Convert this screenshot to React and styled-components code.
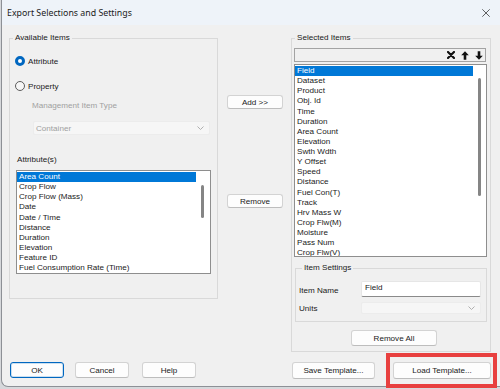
import React from 'react';
import styled, { createGlobalStyle } from 'styled-components';

const GlobalStyle = createGlobalStyle`
  html, body {
    margin: 0;
    padding: 0;
  }
  body {
    width: 500px;
    height: 389px;
    overflow: hidden;
    background: #d6d8db;
    font-family: 'Liberation Sans', Arial, sans-serif;
    color: #1a1a1a;
  }
`;

const Window = styled.div`
  width: 499px;
  height: 387px;
  margin-left: 1px;
  box-sizing: border-box;
  border-left: 1px solid #8d9096;
  border-bottom: 1px solid #8d9096;
  border-radius: 0 0 0 7px;
  background: #f0f0f0;
  display: flex;
  flex-direction: column;
`;

const TitleBar = styled.div`
  height: 25px;
  flex-shrink: 0;
  background: #eef3f9;
  display: flex;
  align-items: center;
  padding: 0 10px 0 5px;
  font-family: 'Noto Sans', 'Liberation Sans', sans-serif;
  font-size: 8.8px;
  color: #1a1a1a;
`;

const CloseBox = styled.div`
  margin-left: auto;
  width: 8px;
  height: 8px;
  display: flex;
`;

const Body = styled.div`
  display: flex;
  padding: 8px 0 0 7px;
`;

const LeftCol = styled.div`
  width: 209px;
  display: flex;
  flex-direction: column;
`;

const MidCol = styled.div`
  width: 64px;
  padding-left: 9px;
  display: flex;
  flex-direction: column;
`;

const RightCol = styled.div`
  width: 200px;
  display: flex;
  flex-direction: column;
`;

const Group = styled.fieldset`
  margin: ${p => p.$margin || '0'};
  padding: 0 0 0 ${p => p.$padLeft || 0}px;
  width: ${p => p.$width}px;
  height: ${p => p.$height}px;
  box-sizing: border-box;
  border: 1px solid #d9d9d9;
  min-width: 0;
  display: flex;
  flex-direction: column;
`;

const Legend = styled.legend`
  padding: 0 2px;
  margin-left: 3px;
  font-size: 8.1px;
  line-height: 10px;
  color: #1a1a1a;
`;

const RadioRow = styled.div`
  display: flex;
  align-items: center;
  gap: 3px;
  height: 12px;
  margin: ${p => p.$mt}px 0 0 5px;
  font-size: 8.1px;
`;

const RadioDot = styled.span`
  width: 10px;
  height: 10px;
  box-sizing: border-box;
  border-radius: 50%;
  border: ${p => (p.$checked ? '3px solid #0067c0' : '1px solid #5c5c5c')};
  background: ${p => (p.$checked ? '#ffffff' : '#f6f6f6')};
`;

const Label = styled.div`
  font-size: 8.1px;
  line-height: 10px;
  height: 10px;
  color: ${p => (p.$disabled ? '#a0a0a0' : '#1a1a1a')};
  margin: ${p => p.$margin};
  white-space: nowrap;
`;

const Combo = styled.div`
  width: ${p => p.$width}px;
  height: ${p => p.$height}px;
  margin: ${p => p.$margin || '0'};
  box-sizing: border-box;
  background: #f6f6f6;
  border: 1px solid #ececec;
  border-radius: 2px;
  display: flex;
  align-items: center;
  padding: 0 5px 0 2px;
  font-size: 8.1px;
  color: #a0a0a0;
`;

const Chevron = styled.svg`
  margin-left: auto;
`;

const ListBox = styled.div`
  width: ${p => p.$width}px;
  height: ${p => p.$height}px;
  margin: ${p => p.$margin || '0'};
  box-sizing: border-box;
  border: 1px solid #8e8e8e;
  background: #ffffff;
  display: flex;
  overflow: hidden;
`;

const ListItems = styled.div`
  width: ${p => p.$width}px;
  padding-top: 1px;
  display: flex;
  flex-direction: column;
  overflow: hidden;
`;

const ListRow = styled.div`
  height: 10.13px;
  line-height: 10.13px;
  flex-shrink: 0;
  padding-left: 2px;
  font-size: 8.1px;
  white-space: nowrap;
  background: ${p => (p.$selected ? '#0078d7' : 'transparent')};
  color: ${p => (p.$selected ? '#ffffff' : '#1a1a1a')};
`;

const ScrollTrack = styled.div`
  flex: 1;
  display: flex;
  flex-direction: column;
`;

const Thumb = styled.div`
  width: 3px;
  margin: ${p => p.$top}px 0 0 5px;
  height: ${p => p.$height}px;
  border-radius: 2px;
  background: #858585;
`;

const Button = styled.button`
  width: ${p => p.$width}px;
  height: ${p => p.$height}px;
  margin: ${p => p.$margin || '0'};
  padding: 0;
  box-sizing: border-box;
  background: #fdfdfd;
  border: 1px solid ${p => (p.$primary ? '#0067c0' : '#d3d3d3')};
  border-bottom-color: ${p => (p.$primary ? '#0067c0' : '#bdbdbd')};
  box-shadow: ${p => (p.$primary ? 'inset 0 0 0 1px rgba(0, 103, 192, 0.2)' : 'none')};
  border-radius: 3px;
  font-family: 'Liberation Sans', Arial, sans-serif;
  font-size: 8.1px;
  color: #1a1a1a;
`;

const ButtonRow = styled.div`
  display: flex;
  gap: ${p => p.$gap}px;
  margin: ${p => p.$margin};
`;

const Toolbar = styled.div`
  width: 192px;
  height: 14px;
  margin: 5px 0 0 2px;
  box-sizing: border-box;
  border: 1px solid #a3a3a3;
  background: #f0f0f0;
  display: flex;
  align-items: center;
  justify-content: flex-end;
  gap: 6px;
  padding-right: 2px;
`;

const FieldRow = styled.div`
  display: flex;
  align-items: center;
  margin-top: ${p => p.$mt}px;
`;

const FieldLabel = styled.div`
  width: 62px;
  font-size: 8.1px;
  padding-top: ${p => p.$pt || 0}px;
`;

const TextBox = styled.div`
  width: 120px;
  height: 16px;
  box-sizing: border-box;
  background: #ffffff;
  border: 1px solid #e6e6e6;
  border-bottom: 1px solid #8a8a8a;
  border-radius: 2px;
  padding: 1px 0 0 3px;
  font-size: 8.1px;
  line-height: 10px;
`;

const LoadWrap = styled.div`
  position: relative;
  display: flex;
`;

const Highlight = styled.div`
  position: absolute;
  top: -9px;
  left: -7px;
  right: -6px;
  bottom: -9px;
  border: 4px solid #e8403f;
  pointer-events: none;
`;

const attributes = [
  'Area Count',
  'Crop Flow',
  'Crop Flow (Mass)',
  'Date',
  'Date / Time',
  'Distance',
  'Duration',
  'Elevation',
  'Feature ID',
  'Fuel Consumption Rate (Time)',
];

const selected = [
  'Field',
  'Dataset',
  'Product',
  'Obj. Id',
  'Time',
  'Duration',
  'Area Count',
  'Elevation',
  'Swth Wdth',
  'Y Offset',
  'Speed',
  'Distance',
  'Fuel Con(T)',
  'Track',
  'Hrv Mass W',
  'Crop Flw(M)',
  'Moisture',
  'Pass Num',
  'Crop Flw(V)',
];

const ChevronIcon = () => (
  <Chevron width="7" height="4" viewBox="0 0 7 4">
    <path d="M0.5 0.5 L3.5 3.5 L6.5 0.5" fill="none" stroke="#a8a8a8" strokeWidth="0.9" />
  </Chevron>
);

const DeleteIcon = () => (
  <svg width="8" height="8" viewBox="0 0 8 8">
    <path d="M1 1 L7 7 M7 1 L1 7" stroke="#111" strokeWidth="2.2" strokeLinecap="round" />
  </svg>
);

const ArrowIcon = ({ down }) => (
  <svg width="8" height="9" viewBox="0 0 8 9" style={down ? { transform: 'rotate(180deg)' } : undefined}>
    <path d="M4 0.3 L7.8 4.3 L5.3 4.3 L5.3 8.8 L2.7 8.8 L2.7 4.3 L0.2 4.3 Z" fill="#111" />
  </svg>
);

const App = () => {
  return (
    <>
      <GlobalStyle />
      <Window>
        <TitleBar>
          Export Selections and Settings
          <CloseBox>
            <svg width="8" height="8" viewBox="0 0 8 8">
              <path d="M0.3 0.3 L7.7 7.7 M7.7 0.3 L0.3 7.7" stroke="#3a3a3a" strokeWidth="0.8" />
            </svg>
          </CloseBox>
        </TitleBar>
        <Body>
          <LeftCol>
            <Group $width={209} $height={266}>
              <Legend>Available Items</Legend>
              <RadioRow $mt={12}>
                <RadioDot $checked />
                Attribute
              </RadioRow>
              <RadioRow $mt={13}>
                <RadioDot />
                Property
              </RadioRow>
              <Label $disabled $margin="9px 0 0 22px">Management Item Type</Label>
              <Combo $width={177} $height={14} $margin="10px 0 0 23px">
                Container
                <ChevronIcon />
              </Combo>
              <Label $margin="20px 0 0 7px">Attribute(s)</Label>
              <ListBox $width={195} $height={104} $margin="5px 0 0 6px">
                <ListItems $width={179}>
                  {attributes.map((a, i) => (
                    <ListRow key={a} $selected={i === 0}>{a}</ListRow>
                  ))}
                </ListItems>
                <ScrollTrack>
                  <Thumb $top={14} $height={33} />
                </ScrollTrack>
              </ListBox>
            </Group>
            <ButtonRow $gap={11} $margin="63px 0 0 1px">
              <Button $primary $width={54} $height={16}>OK</Button>
              <Button $width={54} $height={16}>Cancel</Button>
              <Button $width={54} $height={16} $margin="0 0 0 2px">Help</Button>
            </ButtonRow>
          </LeftCol>

          <MidCol>
            <Button $width={56} $height={14} $margin="62px 0 0 0">Add &gt;&gt;</Button>
            <Button $width={56} $height={14} $margin="85px 0 0 0">Remove</Button>
          </MidCol>

          <RightCol>
            <Group $width={200} $height={319}>
              <Legend>Selected Items</Legend>
              <Toolbar>
                <DeleteIcon />
                <ArrowIcon />
                <ArrowIcon down />
              </Toolbar>
              <ListBox $width={193} $height={193} $margin="2px 0 0 2px">
                <ListItems $width={178}>
                  {selected.map((s, i) => (
                    <ListRow key={s} $selected={i === 0}>{s}</ListRow>
                  ))}
                </ListItems>
                <ScrollTrack>
                  <Thumb $top={13} $height={118} />
                </ScrollTrack>
              </ListBox>
              <Group $width={192} $height={59} $margin="6px 0 0 3px" $padLeft={3}>
                <Legend>Item Settings</Legend>
                <FieldRow $mt={8}>
                  <FieldLabel $pt={2}>Item Name</FieldLabel>
                  <TextBox>Field</TextBox>
                </FieldRow>
                <FieldRow $mt={5}>
                  <FieldLabel>Units</FieldLabel>
                  <Combo $width={120} $height={12}>
                    <ChevronIcon />
                  </Combo>
                </FieldRow>
              </Group>
              <Button $width={86} $height={16} $margin="8px 0 0 59px">Remove All</Button>
            </Group>
            <ButtonRow $gap={18} $margin="10px 0 0 1px">
              <Button $width={83} $height={17}>Save Template...</Button>
              <LoadWrap>
                <Button $width={98} $height={17}>Load Template...</Button>
                <Highlight />
              </LoadWrap>
            </ButtonRow>
          </RightCol>
        </Body>
      </Window>
    </>
  );
};

export default App;
